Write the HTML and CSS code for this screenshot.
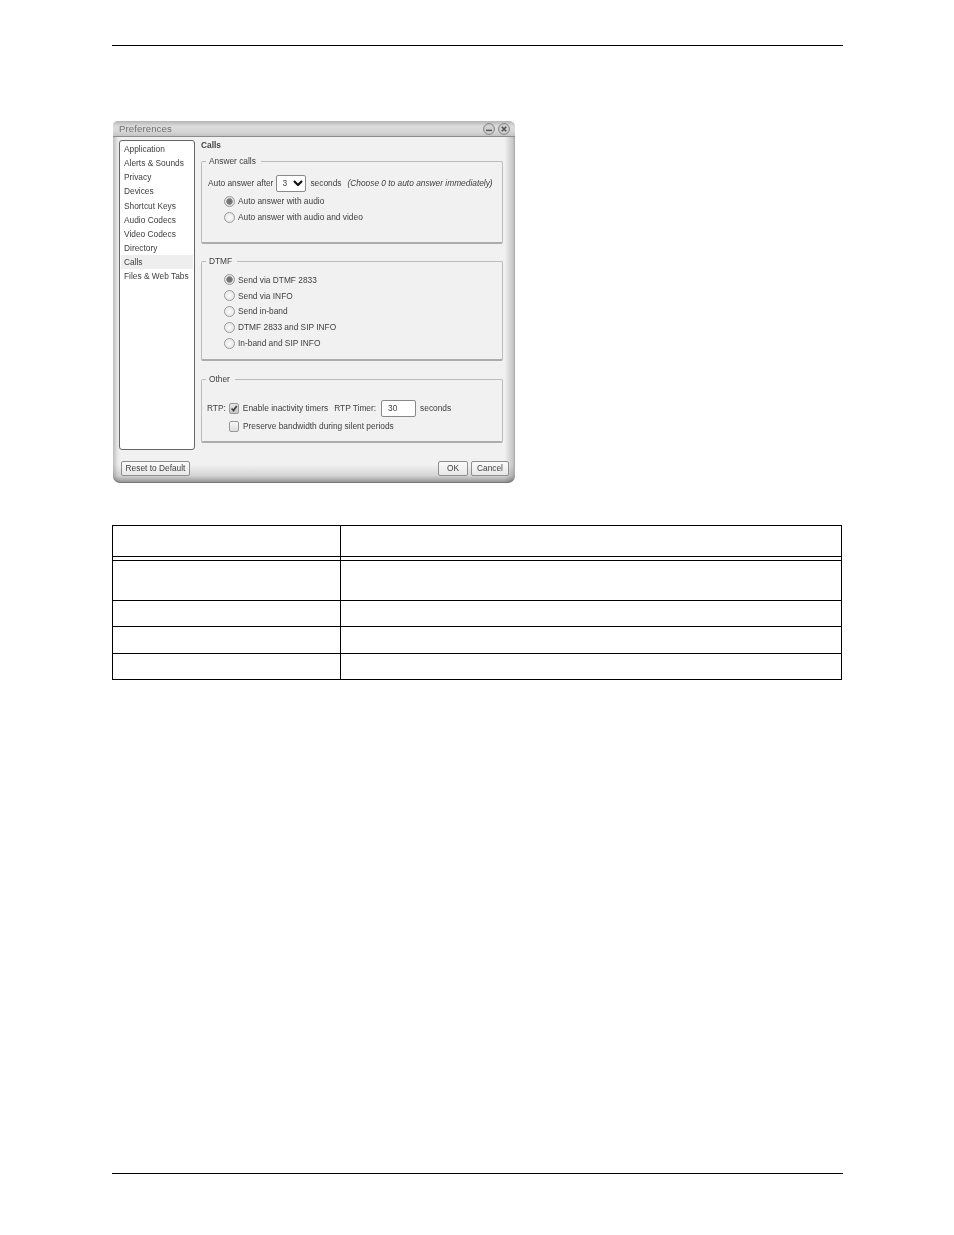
FILE: index.html
```html
<!DOCTYPE html>
<html lang="en">
<head>
<meta charset="utf-8">
<title>Preferences</title>
<link rel="stylesheet" href="styles.css">
</head>
<body>
<div class="page">
  <div class="rule"></div>
  <div class="dialog">
    <div class="titlebar">
      <span class="title">Preferences</span>
      <span class="winbtns">
        <svg class="winbtn" viewBox="0 0 12 12"><circle cx="6" cy="6" r="5.4" fill="#cfcfcf" stroke="#808080"/><path d="M3 7.4h6" stroke="#5a5a5a" stroke-width="1.6"/></svg>
        <svg class="winbtn" viewBox="0 0 12 12"><circle cx="6" cy="6" r="5.4" fill="#cfcfcf" stroke="#808080"/><path d="M3.8 3.8l4.4 4.4M8.2 3.8l-4.4 4.4" stroke="#505050" stroke-width="1.6"/></svg>
      </span>
    </div>
    <div class="content">
      <ul class="nav">
        <li>Application</li>
        <li>Alerts &amp; Sounds</li>
        <li>Privacy</li>
        <li>Devices</li>
        <li>Shortcut Keys</li>
        <li>Audio Codecs</li>
        <li>Video Codecs</li>
        <li>Directory</li>
        <li class="active">Calls</li>
        <li>Files &amp; Web Tabs</li>
      </ul>
      <div class="panel">
        <div class="heading">Calls</div>
        <fieldset class="group group-answer">
          <legend>Answer calls</legend>
          <div class="row-auto">
            <span>Auto answer after</span>
            <span class="select">3<svg class="chev" viewBox="0 0 10 6"><path d="M1 1l4 4 4-4" fill="none" stroke="#111" stroke-width="2.2"/></svg></span>
            <span>seconds</span>
            <em class="hint">(Choose 0 to auto answer immediately)</em>
          </div>
          <div class="radios radios-answer">
            <div class="opt"><span class="radio on"></span>Auto answer with audio</div>
            <div class="opt"><span class="radio"></span>Auto answer with audio and video</div>
          </div>
        </fieldset>
        <fieldset class="group group-dtmf">
          <legend>DTMF</legend>
          <div class="radios radios-dtmf">
            <div class="opt"><span class="radio on"></span>Send via DTMF 2833</div>
            <div class="opt"><span class="radio"></span>Send via INFO</div>
            <div class="opt"><span class="radio"></span>Send in-band</div>
            <div class="opt"><span class="radio"></span>DTMF 2833 and SIP INFO</div>
            <div class="opt"><span class="radio"></span>In-band and SIP INFO</div>
          </div>
        </fieldset>
        <fieldset class="group group-other">
          <legend>Other</legend>
          <div class="row-rtp">
            <span class="rtp-label">RTP:</span>
            <span class="check checked"><svg viewBox="0 0 10 10"><path d="M2 5l2.4 2.6L8.4 1.8" fill="none" stroke="#444" stroke-width="2.2"/></svg></span>
            <span>Enable inactivity timers</span>
            <span class="timer-label">RTP Timer:</span>
            <span class="input">30</span>
            <span>seconds</span>
          </div>
          <div class="row-preserve">
            <span class="check"></span>
            <span>Preserve bandwidth during silent periods</span>
          </div>
        </fieldset>
      </div>
    </div>
    <div class="footer">
      <span class="btn btn-reset">Reset to Default</span>
      <span class="spacer"></span>
      <span class="btn btn-ok">OK</span>
      <span class="btn btn-cancel">Cancel</span>
    </div>
  </div>
  <table class="grid">
    <colgroup><col class="c1"><col class="c2"></colgroup>
    <tr class="r-head"><td></td><td></td></tr>
    <tr class="r-gap"><td></td><td></td></tr>
    <tr class="r-a"><td></td><td></td></tr>
    <tr class="r-b"><td></td><td></td></tr>
    <tr class="r-c"><td></td><td></td></tr>
    <tr class="r-d"><td></td><td></td></tr>
  </table>
  <div class="rule rule-bottom"></div>
</div>
</body>
</html>
```
FILE: styles.css
```css
* { box-sizing: border-box; }
html, body { margin: 0; padding: 0; background: #fff; }
.page { width: 954px; height: 1235px; padding: 45px 0 0 112px; overflow: hidden; }
.rule { width: 731px; height: 1px; background: #000; }
.rule-bottom { margin-top: 493px; }

.dialog {
  width: 402px; height: 362px; margin: 75px 0 0 1px;
  border-radius: 5px 6px 7px 7px;
  background:
    linear-gradient(to bottom, rgba(0,0,0,0) 95%, rgba(0,0,0,.12) 98%, rgba(0,0,0,.42) 100%),
    linear-gradient(to right, #bdbdbd 0, #e8e8e8 1.2%, #f1f1f1 2%, #f1f1f1 97.4%, #c8c8c8 99.4%, #b4b4b4 100%);
  box-shadow: inset 0 -1px 0 #777, inset -1px 0 0 #aaa;
  font: 8.35px/1 "Liberation Sans", Arial, sans-serif;
  color: #404040;
  filter: blur(.35px);
  display: flex; flex-direction: column;
}
.titlebar {
  height: 16px; flex: none; display: flex; align-items: center; justify-content: space-between;
  padding: 0 5px 0 6px;
  border-radius: 5px 6px 0 0;
  background: linear-gradient(to bottom, #b4b4b4, #dcdcdc 35%, #d6d6d6 70%, #c4c4c4);
  border-bottom: 1px solid #8c8c8c;
}
.title { font-size: 9.6px; color: #707070; letter-spacing: .1px; }
.winbtns { display: flex; gap: 3px; }
.winbtn { width: 12px; height: 12px; display: block; }

.content { display: flex; height: 316px; flex: none; padding: 3px 0 0 6px; }
.nav {
  width: 76px; height: 310px; margin: 0; padding: 1px 1px 0; list-style: none;
  background: #fff; border: 1px solid #666; border-radius: 3px; flex: none;
}
.nav li { height: 14.15px; line-height: 14.15px; padding-left: 3px; white-space: nowrap; }
.nav li.active { background: #eee; }

.panel { width: 302px; margin-left: 6px; }
.heading { font-weight: bold; height: 16px; line-height: 11px; color: #444; }
.group {
  margin: 0; padding: 0; min-width: 0;
  border: 1px solid #bcbcbc; border-bottom: 2px solid #acacac; border-radius: 2px;
}
.group legend { margin-left: 4px; padding: 0 5px 0 3px; line-height: 10px; white-space: nowrap; }
.group-answer { height: 88px; }
.group-dtmf { height: 105px; margin-top: 12px; }
.group-other { height: 69px; margin-top: 13px; }

.row-auto { display: flex; align-items: center; margin: 9px 0 0 6px; height: 16px; }
.select {
  width: 30px; height: 17px; margin: 0 4px 0 3px; padding-left: 5px; background: #fff;
  border: 1px solid #8a8a8a; border-radius: 2px;
  display: flex; align-items: center; justify-content: space-between; padding-right: 2px;
}
.chev { width: 10px; height: 6px; display: block; }
.hint { margin-left: 6px; }

.radios { margin-left: 22px; display: flex; flex-direction: column; }
.radios-answer { margin-top: 2px; }
.radios-answer .opt { height: 16px; }
.radios-dtmf { margin-top: 6px; }
.opt { height: 15.8px; display: flex; align-items: center; white-space: nowrap; }
.radio {
  width: 11px; height: 11px; margin-right: 3px; border-radius: 50%; flex: none;
  border: 1px solid #999; background: radial-gradient(circle, #fbfbfb, #e2e2e2);
}
.radio.on { background: radial-gradient(circle, #6e6e6e 0, #7c7c7c 44%, #e4e4e4 56%, #dcdcdc 100%); }

.row-rtp { display: flex; align-items: center; height: 17px; margin: 16px 0 0 5px; white-space: nowrap; }
.rtp-label { margin-right: 3px; }
.check {
  width: 10px; height: 11px; flex: none; margin-right: 4px; display: block;
  border: 1px solid #999; border-radius: 2px; background: linear-gradient(#f8f8f8, #ddd);
}
.check.checked { background: linear-gradient(#e6e6e6, #c8c8c8); }
.check svg { display: block; width: 8px; height: 9px; }
.timer-label { margin: 0 5px 0 6px; }
.input {
  width: 35px; height: 17px; margin-right: 4px; padding-left: 6px; background: #fff;
  border: 1px solid #888; border-radius: 2px; display: flex; align-items: center;
}
.row-preserve { display: flex; align-items: center; height: 12px; margin: 3px 0 0 27px; white-space: nowrap; }

.footer { display: flex; align-items: center; height: 15px; margin-top: 8px; padding: 0 6px 0 8px; flex: none; }
.spacer { flex: 1; }
.btn {
  height: 15px; display: flex; align-items: center; justify-content: center;
  background: linear-gradient(#fafafa, #e8e8e8); border: 1px solid #8e8e8e; border-radius: 2px;
}
.btn-reset { width: 69px; }
.btn-ok { width: 30px; margin-right: 3px; }
.btn-cancel { width: 38px; }

.grid { border-collapse: collapse; table-layout: fixed; width: 729px; margin-top: 42px; border: 1px solid #000; }
.c1 { width: 228px; }
.c2 { width: 501px; }
.grid td { padding: 0; border: 1px solid #000; }
.r-head td { height: 31px; }
.r-gap td { height: 4px; }
.r-a td { height: 40px; }
.r-b td { height: 26px; }
.r-c td { height: 27px; }
.r-d td { height: 26px; }
```
